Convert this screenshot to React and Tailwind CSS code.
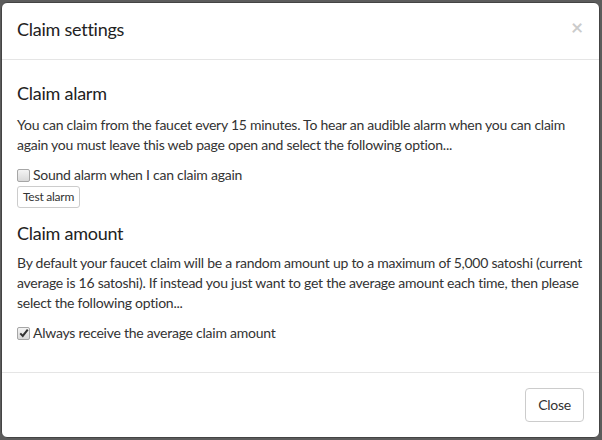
import React, { useState } from "react";

function Checkbox({ checked, onChange, children }) {
  return (
    <label className="flex cursor-pointer items-center gap-[3px]" onClick={onChange}>
      <span className="flex h-[13px] w-[13px] shrink-0 items-center justify-center rounded-[2px] border border-[#a6a6a6] bg-gradient-to-b from-[#f4f4f4] to-[#d9d9d9]">
        {checked && (
          <svg viewBox="0 0 12 12" className="h-[10px] w-[10px]">
            <path d="M1.5 6.5 L4.5 9.5 L10.5 2" fill="none" stroke="#333" strokeWidth="2.4" />
          </svg>
        )}
      </span>
      <span>{children}</span>
    </label>
  );
}

export default function App() {
  const [alarm, setAlarm] = useState(false);
  const [average, setAverage] = useState(true);

  return (
    <div className="min-h-[440px] w-[602px] bg-[#5c5c5c] pt-[2px] pb-[2px] pl-[1px] pr-[2px] font-['Lato',sans-serif] tracking-[-0.25px] text-[14px] leading-[20px] text-[#333]">
      <div className="rounded-[6px] border border-[#444] bg-white">
        {/* Header */}
        <div className="flex items-center justify-between border-b border-[#e5e5e5] px-[15px] pt-[13px] pb-[17px]">
          <h3 className="text-[18px] leading-[26px] text-[#222]">Claim settings</h3>
          <button className="mr-[1px] -mt-[5px] text-[21px] font-bold leading-none text-black opacity-20">×</button>
        </div>

        {/* Body */}
        <div className="px-[15px] pt-[13px] pb-[15px]">
          <h4 className="mt-[10px] mb-[12px] text-[18px] leading-[20px] text-[#222]">Claim alarm</h4>
          <p className="mb-[10px]">
            You can claim from the faucet every 15 minutes. To hear an audible alarm when you can claim again you must leave this web page open and select the following option...
          </p>
          <div className="mb-[15px]">
            <Checkbox checked={alarm} onChange={() => setAlarm(!alarm)}>
              Sound alarm when I can claim again
            </Checkbox>
            <button className="mt-[1px] rounded-[3px] border border-[#ccc] bg-white px-[5px] py-px text-[12px] leading-[18px] text-[#333]">
              Test alarm
            </button>
          </div>

          <h4 className="mb-[10px] text-[18px] leading-[20px] text-[#222]">Claim amount</h4>
          <p className="mb-[10px]">
            By default your faucet claim will be a random amount up to a maximum of 5,000 satoshi (current average is 16 satoshi). If instead you just want to get the average amount each time, then please select the following option...
          </p>
          <div className="mb-[14px]">
            <Checkbox checked={average} onChange={() => setAverage(!average)}>
              Always receive the average claim amount
            </Checkbox>
          </div>
        </div>

        {/* Footer */}
        <div className="flex justify-end border-t border-[#e5e5e5] p-[15px]">
          <button className="rounded-[4px] border border-[#ccc] bg-white px-[12px] py-[6px] text-[14px] leading-[20px] text-[#333]">
            Close
          </button>
        </div>
      </div>
    </div>
  );
}
